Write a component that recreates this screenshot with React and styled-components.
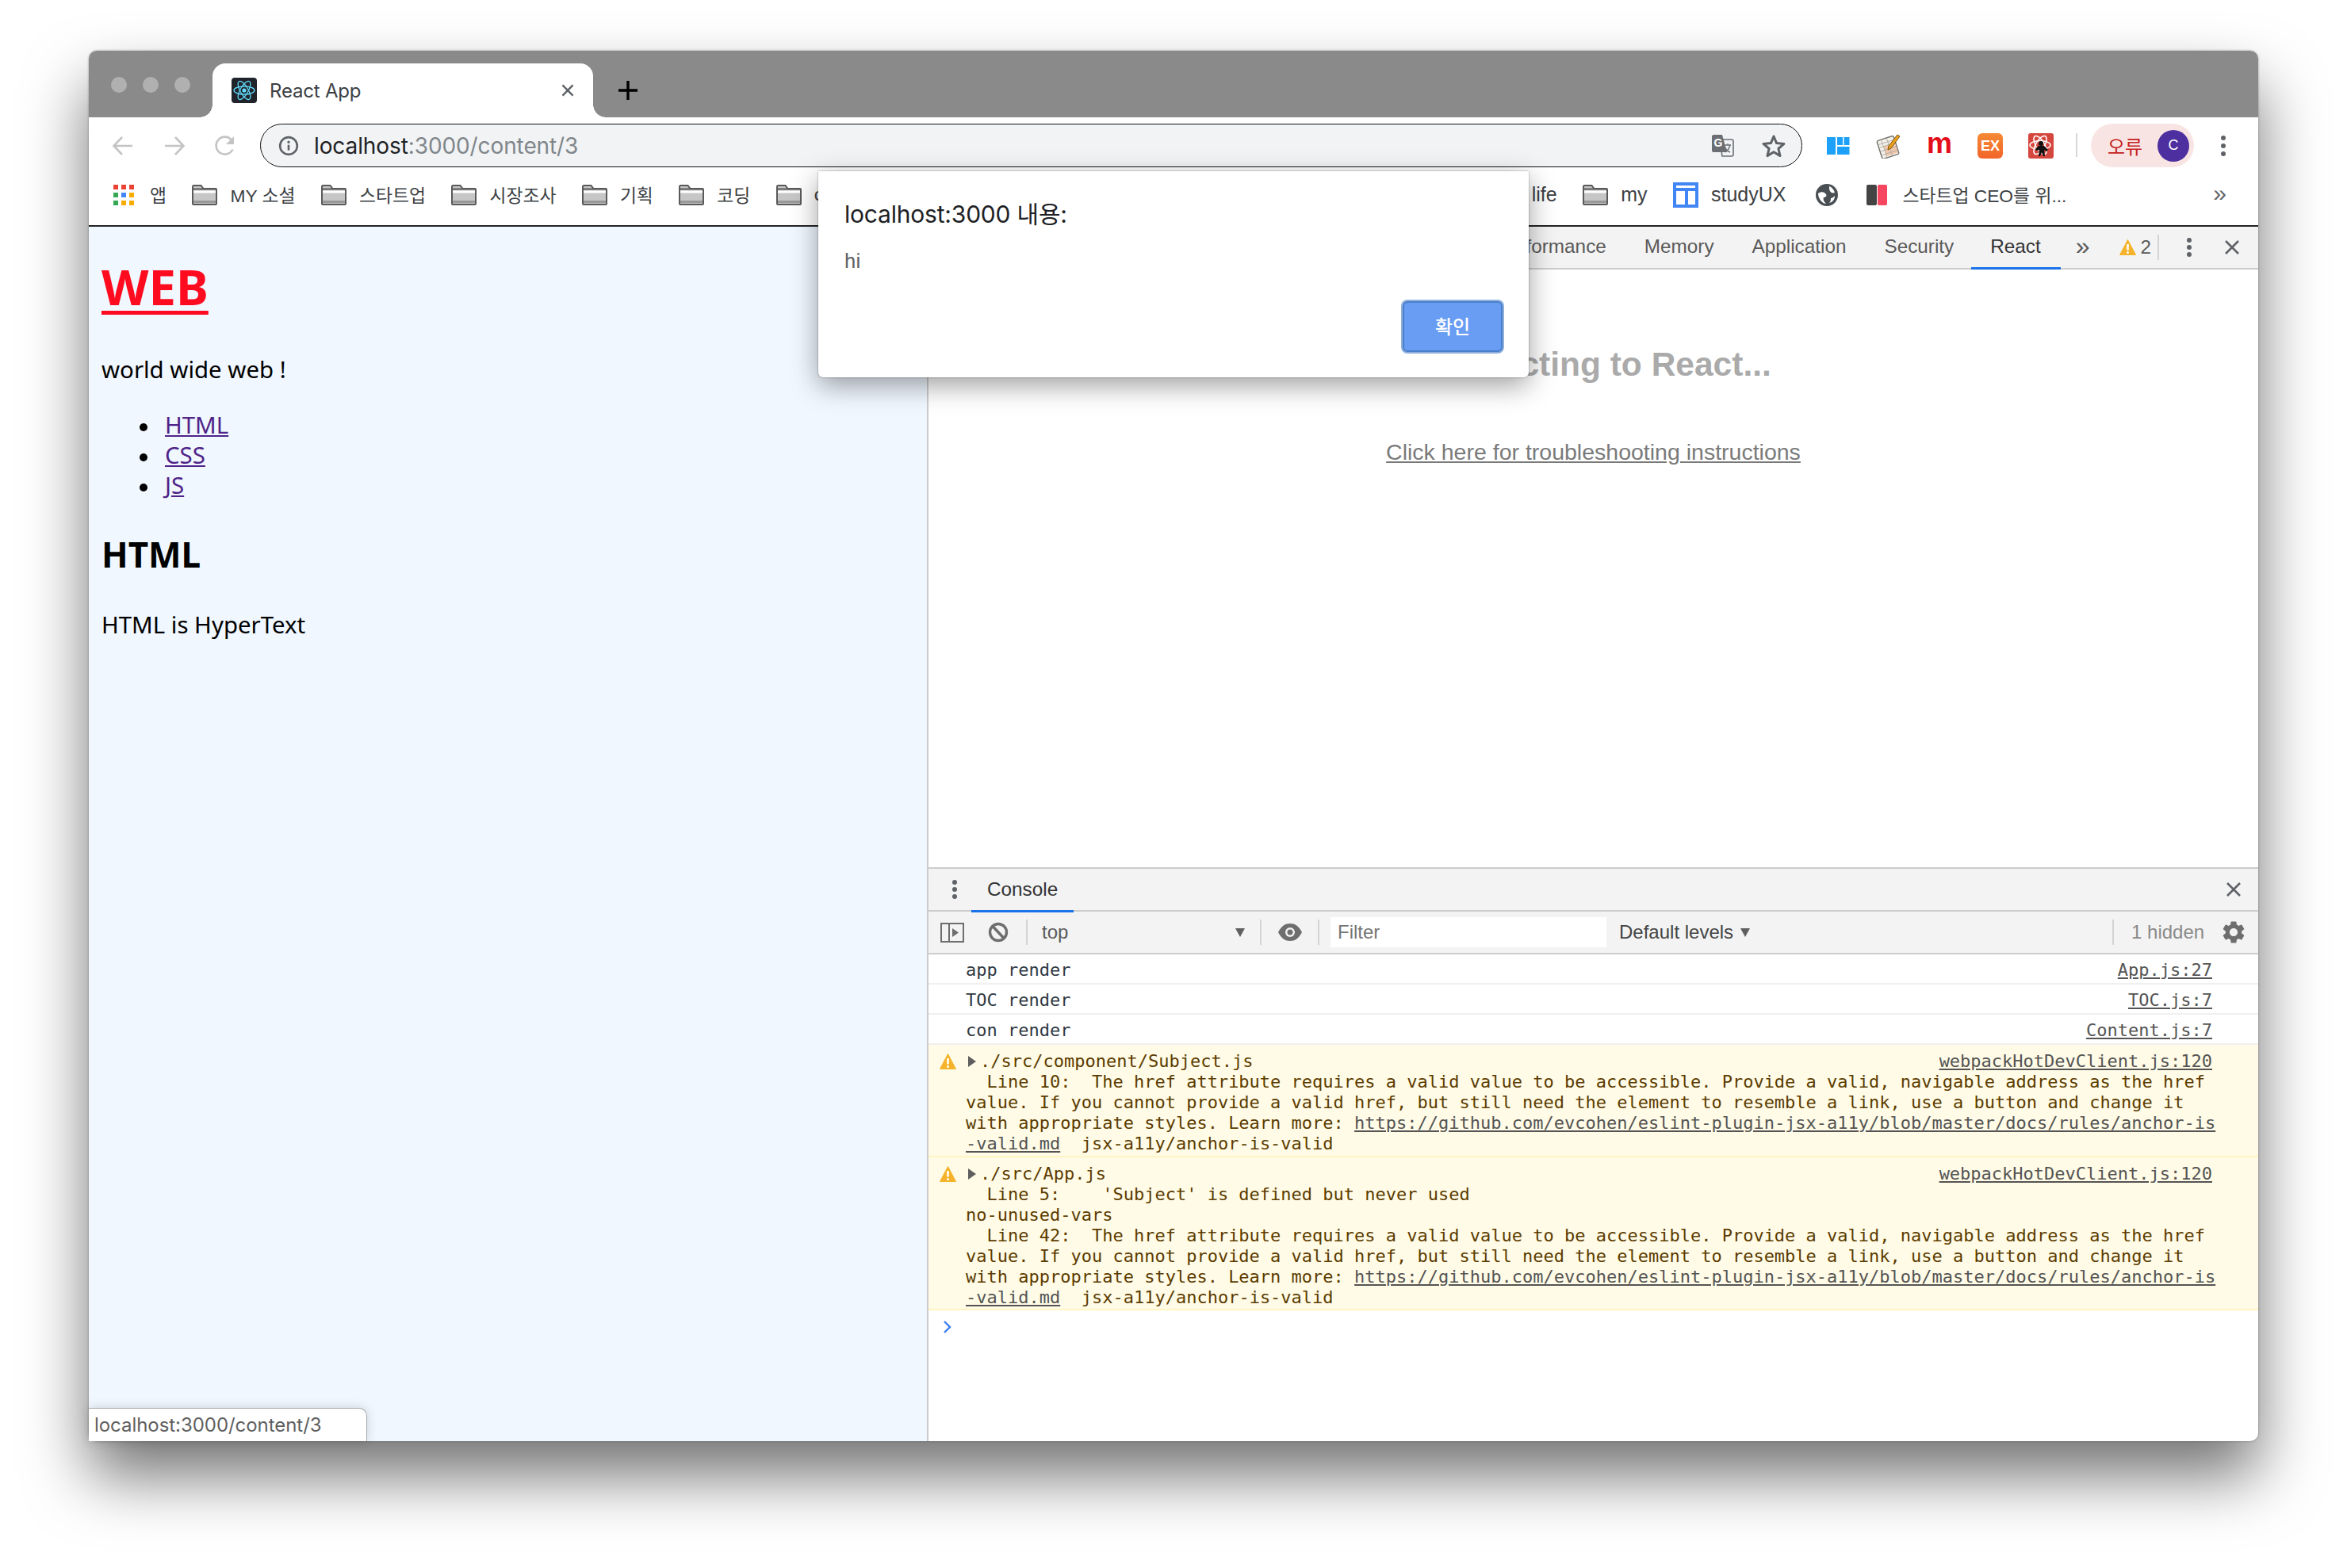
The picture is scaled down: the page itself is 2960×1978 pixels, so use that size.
import React from "react";
import styled, { createGlobalStyle } from "styled-components";
import { MdSettings } from "react-icons/md";

const GlobalStyle = createGlobalStyle`
  html, body {
    margin: 0;
    padding: 0;
    background: #fff;
  }
  * {
    box-sizing: border-box;
  }
`;

const UI = `"Inter", "Noto Sans CJK KR", sans-serif`;
const DEV = `"Liberation Sans", "Noto Sans CJK KR", sans-serif`;
const MONO = `"DejaVu Sans Mono", monospace`;

const Desktop = styled.div`
  width: 2960px;
  height: 1978px;
  padding: 64px 0 0 112px;
  overflow: hidden;
  background: #fff;
`;

const Win = styled.div`
  position: relative;
  width: 2736px;
  height: 1754px;
  display: flex;
  flex-direction: column;
  background: #fff;
  border-radius: 10px;
  box-shadow: 0 44px 80px rgba(0, 0, 0, 0.55), 0 0 3px rgba(0, 0, 0, 0.35);
`;

const TitleBar = styled.div`
  height: 84px;
  display: flex;
  align-items: flex-start;
  padding-left: 28px;
  background: #8a8a8a;
  border-radius: 10px 10px 0 0;
`;

const Dots = styled.div`
  display: flex;
  gap: 20px;
  margin-top: 33px;
`;

const Dot = styled.span`
  width: 20px;
  height: 20px;
  border-radius: 50%;
  background: #b0b0b0;
`;

const Tab = styled.div`
  position: relative;
  width: 480px;
  height: 68px;
  margin: 16px 0 0 28px;
  padding: 0 23px 0 24px;
  display: flex;
  align-items: center;
  background: #fff;
  border-radius: 16px 16px 0 0;
  font: 24px ${UI};
  letter-spacing: -0.2px;
  color: #3c4043;
  &::before,
  &::after {
    content: "";
    position: absolute;
    bottom: 0;
    width: 16px;
    height: 16px;
  }
  &::before {
    left: -16px;
    background: radial-gradient(circle at 0 0, transparent 15.5px, #fff 16px);
  }
  &::after {
    right: -16px;
    background: radial-gradient(circle at 100% 0, transparent 15.5px, #fff 16px);
  }
`;

const TabTitle = styled.span`
  flex: 1;
  margin-left: 16px;
`;

const NewTab = styled.svg`
  width: 28px;
  height: 28px;
  margin: 36px 0 0 30px;
`;

const Toolbar = styled.div`
  height: 72px;
  display: flex;
  align-items: flex-start;
  padding: 8px 0 0 29px;
`;

const NavIcon = styled.svg`
  width: 28px;
  height: 28px;
  margin: 14px 0 0 ${(p) => p.$gap || 0}px;
`;

const Omnibox = styled.div`
  width: 1945px;
  height: 55px;
  margin-left: 30px;
  padding: 0 20px 0 22px;
  display: flex;
  align-items: center;
  background: #f1f3f4;
  border: 1.5px solid #111;
  border-radius: 28px;
`;

const Url = styled.div`
  flex: 1;
  margin-left: 19px;
  font: 28px ${UI};
  letter-spacing: -0.1px;
  color: #80868b;
  b {
    font-weight: 400;
    color: #202124;
  }
`;

const OmniIcon = styled.svg`
  flex: none;
  width: ${(p) => p.$size || 30}px;
  height: ${(p) => p.$size || 30}px;
  margin-left: ${(p) => p.$gap || 0}px;
`;

const Extensions = styled.div`
  display: flex;
  gap: 32px;
  margin: 12px 0 0 29px;
`;

const ExtSvg = styled.svg`
  display: block;
  width: 32px;
  height: 32px;
`;

const ExtMark = styled.span`
  width: 32px;
  height: 32px;
  display: flex;
  align-items: center;
  justify-content: center;
  font: bold 36px/32px "Liberation Sans", sans-serif;
  color: #e30f1a;
  span {
    margin-top: -6px;
  }
`;

const ExtBadge = styled.span`
  width: 32px;
  height: 32px;
  display: flex;
  align-items: center;
  justify-content: center;
  border-radius: 6px;
  background: linear-gradient(#f58a34, #f2652a);
  font: bold 18px "Liberation Sans", sans-serif;
  color: #fff;
`;

const ToolSep = styled.span`
  width: 2px;
  height: 30px;
  margin: 12px 0 0 28px;
  background: #d8d8d8;
`;

const ProfilePill = styled.div`
  width: 130px;
  height: 55px;
  margin-left: 17px;
  padding: 0 6px 0 21px;
  display: flex;
  align-items: center;
  justify-content: space-between;
  border-radius: 28px;
  background: #f8e5e3;
  font: 24px "Noto Sans CJK KR", sans-serif;
  color: #c5221f;
`;

const Avatar = styled.span`
  width: 40px;
  height: 40px;
  display: flex;
  align-items: center;
  justify-content: center;
  border-radius: 50%;
  background: #4e2f9f;
  font: 18px "Liberation Sans", sans-serif;
  color: #fff;
`;

const Kebab = styled.span`
  display: flex;
  flex-direction: column;
  justify-content: space-between;
  width: 6px;
  height: ${(p) => p.$h || 26}px;
  margin: ${(p) => p.$m || "0"};
  i {
    width: 6px;
    height: 6px;
    border-radius: 50%;
    background: ${(p) => p.$c || "#5f6368"};
  }
`;

const BookmarkBar = styled.div`
  height: 66px;
  padding: 0 0 13px 31px;
  display: flex;
  align-items: center;
  gap: 32.5px;
  border-bottom: 2px solid #222;
`;

const Bookmark = styled.div`
  display: flex;
  align-items: center;
  gap: ${(p) => p.$gap || 16}px;
  margin-left: ${(p) => p.$push || 0}px;
  font: ${(p) => (p.$latin ? 25 : 22.8)}px ${DEV};
  white-space: nowrap;
  color: #3c4043;
`;

const Chevrons = styled.span`
  margin: -4px 40px 0 auto;
  font: 30px ${DEV};
  color: #5f6368;
`;

const Main = styled.div`
  flex: 1;
  display: flex;
  min-height: 0;
`;

const PagePane = styled.div`
  width: 1057px;
  padding-left: 16px;
  background: #f0f7ff;
  border-radius: 0 0 0 10px;
  font-family: "Noto Sans", sans-serif;
  color: #000;
`;

const PageTitle = styled.h1`
  margin: 39px 0 0;
  font-size: 61.5px;
  font-weight: 700;
  line-height: 72px;
  a {
    color: #fe0b20;
    text-decoration-thickness: 5px;
    text-underline-offset: 7px;
  }
`;

const PageText = styled.p`
  margin: ${(p) => p.$top}px 0 0;
  font-size: 29.4px;
  line-height: 38px;
`;

const TocList = styled.ul`
  margin: 32px 0 0;
  padding-left: 80px;
  list-style: none;
  font-size: 29.4px;
  line-height: 38px;
  a {
    color: #4f2388;
  }
`;

const TocItem = styled.li`
  position: relative;
  &::before {
    content: "";
    position: absolute;
    left: -32px;
    top: 17px;
    width: 10px;
    height: 10px;
    border-radius: 50%;
    background: #000;
  }
`;

const SectionTitle = styled.h2`
  margin: 41px 0 0;
  font-size: 44px;
  font-weight: 700;
  line-height: 54px;
`;

const DevTools = styled.div`
  flex: 1;
  display: flex;
  flex-direction: column;
  min-width: 0;
  overflow: hidden;
  border-left: 2px solid #ccc;
  font-family: ${DEV};
`;

const DevTabs = styled.div`
  height: 54px;
  display: flex;
  align-items: stretch;
  justify-content: flex-end;
  gap: 48px;
  padding-right: 22px;
  background: #f3f3f3;
  border-bottom: 2px solid #ccc;
  font-size: 24.3px;
  color: #5a5a5a;
`;

const DevTab = styled.div`
  position: relative;
  display: flex;
  align-items: center;
  padding-bottom: 2px;
  color: ${(p) => (p.$active ? "#333" : "#5a5a5a")};
  ${(p) =>
    p.$active &&
    `margin-left: -2px;
    &::after {
      content: "";
      position: absolute;
      left: -24px;
      right: -25px;
      bottom: -2px;
      height: 3px;
      background: #1a73e8;
    }`}
`;

const DevTabEnd = styled.div`
  display: flex;
  align-items: center;
  margin-left: -4px;
  color: #5a5a5a;
`;

const MoreTabs = styled.span`
  font-size: 32px;
  line-height: 32px;
  margin-top: -4px;
`;

const ReactPane = styled.div`
  flex: 1;
  padding-top: 96px;
  text-align: center;
`;

const Connecting = styled.div`
  font-size: 42.5px;
  font-weight: 700;
  line-height: 48px;
  color: #aaa;
`;

const Troubleshoot = styled.a`
  display: block;
  margin-top: 68px;
  font-size: 28.5px;
  line-height: 36px;
  color: #7a7a7a;
  text-decoration: underline;
`;

const Drawer = styled.div`
  height: 724px;
  display: flex;
  flex-direction: column;
  border-top: 2px solid #ccc;
`;

const DrawerTabs = styled.div`
  height: 54px;
  padding-right: 20px;
  display: flex;
  align-items: center;
  background: #f3f3f3;
  border-bottom: 2px solid #ccc;
`;

const DrawerTab = styled.div`
  position: relative;
  margin-left: 18px;
  padding: 0 20px;
  font-size: 24.3px;
  color: #333;
  &::after {
    content: "";
    position: absolute;
    left: 0;
    right: 0;
    bottom: -15px;
    height: 3px;
    background: #1a73e8;
  }
`;

const CloseIcon = styled.svg`
  flex: none;
  width: ${(p) => p.$size || 22}px;
  height: ${(p) => p.$size || 22}px;
  margin-left: ${(p) => (p.$left === undefined ? "auto" : p.$left + "px")};
`;

const ConsoleBar = styled.div`
  height: 54px;
  display: flex;
  align-items: center;
  background: #f3f3f3;
  border-bottom: 2px solid #ccc;
  font-size: 24px;
  color: #5a5a5a;
`;

const BarIcon = styled.svg`
  flex: none;
  width: ${(p) => p.$w}px;
  height: ${(p) => p.$h || p.$w}px;
  margin-left: ${(p) => p.$gap}px;
`;

const BarSep = styled.span`
  flex: none;
  width: 2px;
  height: 32px;
  margin-left: ${(p) => p.$gap}px;
  background: #d4d4d4;
`;

const ContextSelect = styled.div`
  width: 259px;
  margin-left: 18px;
  display: flex;
  align-items: center;
  justify-content: space-between;
  padding-right: 3px;
`;

const Caret = styled.span`
  width: 0;
  height: 0;
  border-left: 6px solid transparent;
  border-right: 6px solid transparent;
  border-top: 11px solid #5f5f5f;
`;

const FilterBox = styled.div`
  width: 348px;
  height: 38px;
  margin-left: 14px;
  padding-left: 9px;
  display: flex;
  align-items: center;
  background: #fff;
  color: #757575;
`;

const Levels = styled.div`
  margin-left: 16px;
  display: flex;
  align-items: center;
  gap: 9px;
  color: #444;
`;

const HiddenCount = styled.span`
  margin-left: 22px;
  color: #8a8a8a;
`;

const Gear = styled(MdSettings)`
  flex: none;
  margin-left: 20px;
  font-size: 34px;
  color: #6e6e6e;
`;

const Logs = styled.div`
  flex: 1;
  font: 22px/26px ${MONO};
  color: #303942;
`;

const LogRow = styled.div`
  height: 38px;
  padding: 3px 58px 0 47px;
  display: flex;
  align-items: center;
  justify-content: space-between;
  border-bottom: 2px solid #f0f0f0;
  white-space: pre;
`;

const SourceLink = styled.a`
  color: #545454;
  text-decoration: underline;
`;

const WarnRow = styled.div`
  height: ${(p) => p.$h}px;
  display: flex;
  padding: 8px 0 0 14px;
  background: #fffbe6;
  border-bottom: 2px solid #fff5c2;
  color: #5c3c00;
  white-space: pre;
`;

const WarnSvg = styled.svg`
  flex: none;
  width: 21px;
  height: 20px;
  margin: ${(p) => p.$m};
`;

const WarnBody = styled.div`
  flex: 1;
  min-width: 0;
`;

const WarnHead = styled.div`
  display: flex;
  align-items: center;
  padding-right: 58px;
`;

const Expander = styled.span`
  width: 0;
  height: 0;
  margin: 0 5px 0 3px;
  border-top: 7px solid transparent;
  border-bottom: 7px solid transparent;
  border-left: 10px solid #5f5f5f;
`;

const HeadText = styled.span`
  flex: 1;
`;

const Prompt = styled.svg`
  display: block;
  width: 12px;
  height: 18px;
  margin: 12px 0 0 18px;
`;

const Dialog = styled.div`
  position: absolute;
  left: 920px;
  top: 152px;
  width: 896px;
  height: 260px;
  padding: 32px 33px 32px 33px;
  display: flex;
  flex-direction: column;
  background: #fff;
  border-radius: 0 0 6px 6px;
  box-shadow: 0 10px 34px rgba(0, 0, 0, 0.38), 0 0 2px rgba(0, 0, 0, 0.5);
`;

const DialogTitle = styled.div`
  font: 30px/44px "Inter", "Noto Sans CJK KR", sans-serif;
  letter-spacing: -0.2px;
  color: #202124;
`;

const DialogText = styled.div`
  margin-top: 19px;
  font: 26px/36px "Roboto", sans-serif;
  color: #5f6368;
`;

const DialogButton = styled.button`
  align-self: flex-end;
  width: 126px;
  height: 64px;
  margin-top: auto;
  padding: 0 0 4px;
  background: #699cf3;
  border: 2px solid #4a7fca;
  box-shadow: 0 0 0 2px #8fb0dc;
  border-radius: 6px;
  font: 500 24px "Noto Sans CJK KR", sans-serif;
  color: #fff;
`;

const StatusBubble = styled.div`
  position: absolute;
  left: 0;
  bottom: 0;
  width: 351px;
  height: 42px;
  padding-left: 7px;
  display: flex;
  align-items: center;
  background: #fff;
  border-top: 1px solid #aaa;
  border-right: 1px solid #aaa;
  border-radius: 0 10px 0 0;
  box-shadow: 0 0 14px rgba(0, 0, 0, 0.16);
  font: 24px ${UI};
  letter-spacing: -0.05px;
  color: #5f5f5f;
`;

const Folder = () => (
  <svg width="32" height="26" viewBox="0 0 32 26">
    <path d="M1 24V2.5C1 1.7 1.7 1 2.5 1h9l3 4H30c.6 0 1 .5 1 1v18c0 .6-.4 1-1 1H2c-.6 0-1-.4-1-1z" fill="#c6c6c6" stroke="#5a5a5a" strokeWidth="2" />
    <path d="M2 5.5h28" stroke="#5a5a5a" strokeWidth="2" fill="none" />
    <path d="M2 9h28" stroke="#fff" strokeWidth="3" fill="none" />
    <path d="M2 21.5h28" stroke="#999" strokeWidth="3" fill="none" />
  </svg>
);

const AppsGrid = () => (
  <svg width="26" height="26" viewBox="0 0 26 26">
    {[
      ["#ea4335", "#ea4335", "#ea4335"],
      ["#34a853", "#4285f4", "#f9ab00"],
      ["#34a853", "#f9ab00", "#f9ab00"],
    ].map((row, y) =>
      row.map((c, x) => <rect key={x + "" + y} x={x * 10} y={y * 10} width="6" height="6" fill={c} />)
    )}
  </svg>
);

const ReactFavicon = () => (
  <svg width="32" height="32" viewBox="0 0 32 32">
    <rect width="32" height="32" rx="4" fill="#20232a" />
    <g fill="none" stroke="#61dafb" strokeWidth="1.3">
      <ellipse cx="16" cy="16" rx="13" ry="5" />
      <ellipse cx="16" cy="16" rx="13" ry="5" transform="rotate(60 16 16)" />
      <ellipse cx="16" cy="16" rx="13" ry="5" transform="rotate(120 16 16)" />
    </g>
    <circle cx="16" cy="16" r="2.6" fill="#61dafb" />
  </svg>
);

const CloseGlyph = ({ width = 2.6, ...rest }) => (
  <CloseIcon viewBox="0 0 22 22" {...rest}>
    <path d="M3 3l16 16M19 3L3 19" stroke="#5f6368" strokeWidth={width} fill="none" />
  </CloseIcon>
);

const WarnTriangle = ({ m = "3px 12px 0 0" }) => (
  <WarnSvg viewBox="0 0 21 20" $m={m}>
    <path d="M10.5 0.5L20.5 19.5H0.5z" fill="#f4b32a" stroke="#f4b32a" strokeLinejoin="round" />
    <path d="M10.5 6v7.5" stroke="#fff" strokeWidth="2.6" />
    <circle cx="10.5" cy="16.4" r="1.5" fill="#fff" />
  </WarnSvg>
);

const BookmarkItem = ({ name, push, latin }) => (
  <Bookmark $push={push} $latin={latin}>
    <Folder />
    {name}
  </Bookmark>
);

function App() {
  return (
    <React.Fragment>
      <GlobalStyle />
      <Desktop>
        <Win>
          <TitleBar>
            <Dots>
              <Dot />
              <Dot />
              <Dot />
            </Dots>
            <Tab>
              <ReactFavicon />
              <TabTitle>React App</TabTitle>
              <CloseGlyph $size={18} $left={0} width={3} />
            </Tab>
            <NewTab viewBox="0 0 28 28">
              <path d="M14 2v24M2 14h24" stroke="#000" strokeWidth="3.4" fill="none" />
            </NewTab>
          </TitleBar>

          <Toolbar>
            <NavIcon viewBox="0 0 28 28">
              <path d="M26 14H3M13 3L2.5 14 13 25" stroke="#c4c4c4" strokeWidth="2.6" fill="none" />
            </NavIcon>
            <NavIcon viewBox="0 0 28 28" $gap={37}>
              <path d="M2 14h23M15 3l10.5 11L15 25" stroke="#c4c4c4" strokeWidth="2.6" fill="none" />
            </NavIcon>
            <NavIcon viewBox="0 0 28 28" $gap={36}>
              <path d="M23.5 18.5A11 11 0 1 1 22 6.5" stroke="#c4c4c4" strokeWidth="2.6" fill="none" />
              <path d="M25 2v10H15z" fill="#c4c4c4" />
            </NavIcon>
            <Omnibox>
              <OmniIcon viewBox="0 0 30 30" $size={26}>
                <circle cx="15" cy="15" r="12.5" fill="none" stroke="#5f6368" strokeWidth="3" />
                <path d="M15 13.5v8" stroke="#5f6368" strokeWidth="3" />
                <circle cx="15" cy="9.5" r="1.9" fill="#5f6368" />
              </OmniIcon>
              <Url>
                <b>localhost</b>:3000/content/3
              </Url>
              <OmniIcon viewBox="0 0 30 30">
                <path d="M11 7h15c1 0 2 .8 2 2v17c0 1-1 2-2 2H14z" fill="#f1f3f4" stroke="#6b6f73" strokeWidth="1.6" />
                <path d="M3 1h11l6 22H3c-1 0-2-1-2-2V3c0-1 1-2 2-2z" fill="#6b6f73" />
                <text x="3.5" y="16" fontFamily="Liberation Sans" fontWeight="700" fontSize="14" fill="#fff">G</text>
                <path d="M17 14h8M21 12v2M24 14c-1 4-3 7-6 9M18 17c1 3 3 5 6 6" stroke="#6b6f73" strokeWidth="1.4" fill="none" />
              </OmniIcon>
              <OmniIcon viewBox="0 0 30 30" $gap={34}>
                <path d="M15 3l3.6 8.6 9.4.8-7.1 6.1 2.1 9.1L15 22.8l-8 4.8 2.1-9.1L2 12.4l9.4-.8z" fill="none" stroke="#5f6368" strokeWidth="3" strokeLinejoin="round" />
              </OmniIcon>
            </Omnibox>

            <Extensions>
              <ExtSvg viewBox="0 0 32 32">
                <g fill="#1da1f8">
                  <rect x="2" y="5" width="11" height="22" />
                  <rect x="15" y="5" width="7" height="10" />
                  <rect x="23.5" y="5" width="7" height="10" />
                  <rect x="15" y="17" width="15.5" height="10" />
                </g>
              </ExtSvg>
              <ExtSvg viewBox="0 0 32 32">
                <g transform="rotate(-18 15 18)">
                  <rect x="4" y="6" width="22" height="24" rx="2" fill="#f5f2ec" stroke="#77756f" strokeWidth="1.5" />
                  <rect x="10" y="15" width="15" height="13" fill="#f3c6a8" />
                  <path d="M5 11h20M5 15h20M5 20h20M5 25h20M10 7v22M17 7v22" stroke="#b6b3ac" strokeWidth="1" />
                </g>
                <path d="M27 2l3 2-11 15-4 2 1-5z" fill="#eea21b" stroke="#7a5410" strokeWidth="1" />
              </ExtSvg>
              <ExtMark>
                <span>m</span>
              </ExtMark>
              <ExtBadge>EX</ExtBadge>
              <ExtSvg viewBox="0 0 32 32">
                <rect width="32" height="32" rx="3" fill="#d5473e" />
                <g fill="none" stroke="#fff" strokeWidth="1.5">
                  <ellipse cx="15" cy="15" rx="13" ry="5.5" />
                  <ellipse cx="15" cy="15" rx="13" ry="5.5" transform="rotate(60 15 15)" />
                  <ellipse cx="15" cy="15" rx="13" ry="5.5" transform="rotate(120 15 15)" />
                </g>
                <circle cx="16" cy="13" r="3" fill="#111" />
                <path d="M13 16h7l5 5-2 2-3-2 1 8h-2l-2-5-2 5h-2l1-8-4 1-1-2z" fill="#111" />
              </ExtSvg>
            </Extensions>
            <ToolSep />
            <ProfilePill>
              오류
              <Avatar>C</Avatar>
            </ProfilePill>
            <Kebab $m="15px 0 0 34px">
              <i />
              <i />
              <i />
            </Kebab>
          </Toolbar>

          <BookmarkBar>
            <Bookmark $gap={20}>
              <AppsGrid />
              앱
            </Bookmark>
            <BookmarkItem name="MY 소셜" />
            <BookmarkItem name="스타트업" />
            <BookmarkItem name="시장조사" />
            <BookmarkItem name="기획" />
            <BookmarkItem name="코딩" />
            <BookmarkItem name="c" />
            <BookmarkItem name="life" push={813} latin />
            <BookmarkItem name="my" latin />
            <Bookmark $latin>
              <svg width="32" height="32" viewBox="0 0 32 32">
                <path d="M2 2h28v28H2zM2 9h28M17 9v21" fill="none" stroke="#4285f4" strokeWidth="4" />
              </svg>
              studyUX
            </Bookmark>
            <Bookmark $push={5}>
              <svg width="28" height="28" viewBox="0 0 28 28">
                <circle cx="14" cy="14" r="14" fill="#4a4f54" />
                <path d="M3 12c4-3 8-2 10 1 1 2 0 4-3 4-1 2 0 5 3 8-5 0-10-7-10-13zM17 3c3 1 6 4 7 8-3 1-5 0-6-2-1-1-1-3-1-6zM24 15c0 5-3 8-7 9 2-2 2-4 2-6 2 0 3-1 5-3z" fill="#fff" />
              </svg>
            </Bookmark>
            <Bookmark $gap={19} $push={4}>
              <svg width="26" height="26" viewBox="0 0 26 26">
                <rect width="13" height="26" rx="2" fill="#444" />
                <rect x="14" width="12" height="26" rx="2" fill="#f64660" />
              </svg>
              스타트업 CEO를 위...
            </Bookmark>
            <Chevrons>»</Chevrons>
          </BookmarkBar>

          <Main>
            <PagePane>
              <PageTitle>
                <a href="/">WEB</a>
              </PageTitle>
              <PageText $top={50}>world wide web !</PageText>
              <TocList>
                <TocItem>
                  <a href="/content/1">HTML</a>
                </TocItem>
                <TocItem>
                  <a href="/content/2">CSS</a>
                </TocItem>
                <TocItem>
                  <a href="/content/3">JS</a>
                </TocItem>
              </TocList>
              <SectionTitle>HTML</SectionTitle>
              <PageText $top={43}>HTML is HyperText</PageText>
            </PagePane>

            <DevTools>
              <DevTabs>
                <DevTab>Elements</DevTab>
                <DevTab>Console</DevTab>
                <DevTab>Sources</DevTab>
                <DevTab>Network</DevTab>
                <DevTab>Performance</DevTab>
                <DevTab>Memory</DevTab>
                <DevTab>Application</DevTab>
                <DevTab>Security</DevTab>
                <DevTab $active>React</DevTab>
                <DevTabEnd>
                  <MoreTabs>»</MoreTabs>
                  <WarnTriangle m="0 5px 0 38px" />
                  2
                  <BarSep $gap={8} />
                  <Kebab $m="0 0 0 35px" $h={24}>
                    <i />
                    <i />
                    <i />
                  </Kebab>
                  <CloseGlyph $left={40} />
                </DevTabEnd>
              </DevTabs>

              <ReactPane>
                <Connecting>Connecting to React...</Connecting>
                <Troubleshoot href="/">Click here for troubleshooting instructions</Troubleshoot>
              </ReactPane>

              <Drawer>
                <DrawerTabs>
                  <Kebab $m="0 0 0 30px" $h={24}>
                    <i />
                    <i />
                    <i />
                  </Kebab>
                  <DrawerTab>Console</DrawerTab>
                  <CloseGlyph />
                </DrawerTabs>

                <ConsoleBar>
                  <BarIcon viewBox="0 0 30 25" $w={30} $h={25} $gap={15}>
                    <path d="M1 1h28v23H1zM11 1v23" fill="none" stroke="#6e6e6e" strokeWidth="2" />
                    <path d="M15 7l8 5.5-8 5.5z" fill="#6e6e6e" />
                  </BarIcon>
                  <BarIcon viewBox="0 0 26 26" $w={26} $gap={30}>
                    <circle cx="13" cy="13" r="10.5" fill="none" stroke="#6e6e6e" strokeWidth="3.4" />
                    <path d="M6 5.5l14 15" stroke="#6e6e6e" strokeWidth="3.4" />
                  </BarIcon>
                  <BarSep $gap={22} />
                  <ContextSelect>
                    top
                    <Caret />
                  </ContextSelect>
                  <BarSep $gap={16} />
                  <BarIcon viewBox="0 0 32 24" $w={32} $h={24} $gap={20}>
                    <path d="M1 12C5 4 10 1 16 1s11 3 15 11c-4 8-9 11-15 11S5 20 1 12z" fill="#6e6e6e" />
                    <circle cx="16" cy="12" r="6" fill="#f3f3f3" />
                    <circle cx="16" cy="12" r="3.5" fill="#6e6e6e" />
                  </BarIcon>
                  <BarSep $gap={19} />
                  <FilterBox>Filter</FilterBox>
                  <Levels>
                    Default levels
                    <Caret />
                  </Levels>
                  <BarSep $gap={457} />
                  <HiddenCount>1 hidden</HiddenCount>
                  <Gear />
                </ConsoleBar>

                <Logs>
                  <LogRow>
                    app render
                    <SourceLink href="/">App.js:27</SourceLink>
                  </LogRow>
                  <LogRow>
                    TOC render
                    <SourceLink href="/">TOC.js:7</SourceLink>
                  </LogRow>
                  <LogRow>
                    con render
                    <SourceLink href="/">Content.js:7</SourceLink>
                  </LogRow>
                  <WarnRow $h={142}>
                    <WarnTriangle />
                    <WarnBody>
                      <WarnHead>
                        <Expander />
                        <HeadText>./src/component/Subject.js</HeadText>
                        <SourceLink href="/">webpackHotDevClient.js:120</SourceLink>
                      </WarnHead>
                      {"  Line 10:  The href attribute requires a valid value to be accessible. Provide a valid, navigable address as the href\n"}
                      {"value. If you cannot provide a valid href, but still need the element to resemble a link, use a button and change it\n"}
                      {"with appropriate styles. Learn more: "}
                      <SourceLink href="/">https://github.com/evcohen/eslint-plugin-jsx-a11y/blob/master/docs/rules/anchor-is</SourceLink>
                      {"\n"}
                      <SourceLink href="/">-valid.md</SourceLink>
                      {"  jsx-a11y/anchor-is-valid"}
                    </WarnBody>
                  </WarnRow>
                  <WarnRow $h={193}>
                    <WarnTriangle />
                    <WarnBody>
                      <WarnHead>
                        <Expander />
                        <HeadText>./src/App.js</HeadText>
                        <SourceLink href="/">webpackHotDevClient.js:120</SourceLink>
                      </WarnHead>
                      {"  Line 5:    'Subject' is defined but never used\n"}
                      {"no-unused-vars\n"}
                      {"  Line 42:  The href attribute requires a valid value to be accessible. Provide a valid, navigable address as the href\n"}
                      {"value. If you cannot provide a valid href, but still need the element to resemble a link, use a button and change it\n"}
                      {"with appropriate styles. Learn more: "}
                      <SourceLink href="/">https://github.com/evcohen/eslint-plugin-jsx-a11y/blob/master/docs/rules/anchor-is</SourceLink>
                      {"\n"}
                      <SourceLink href="/">-valid.md</SourceLink>
                      {"  jsx-a11y/anchor-is-valid"}
                    </WarnBody>
                  </WarnRow>
                  <Prompt viewBox="0 0 12 18">
                    <path d="M2 2l7 7-7 7" fill="none" stroke="#367cf1" strokeWidth="2.4" />
                  </Prompt>
                </Logs>
              </Drawer>
            </DevTools>
          </Main>

          <StatusBubble>localhost:3000/content/3</StatusBubble>

          <Dialog>
            <DialogTitle>localhost:3000 내용:</DialogTitle>
            <DialogText>hi</DialogText>
            <DialogButton>확인</DialogButton>
          </Dialog>
        </Win>
      </Desktop>
    </React.Fragment>
  );
}

export default App;
